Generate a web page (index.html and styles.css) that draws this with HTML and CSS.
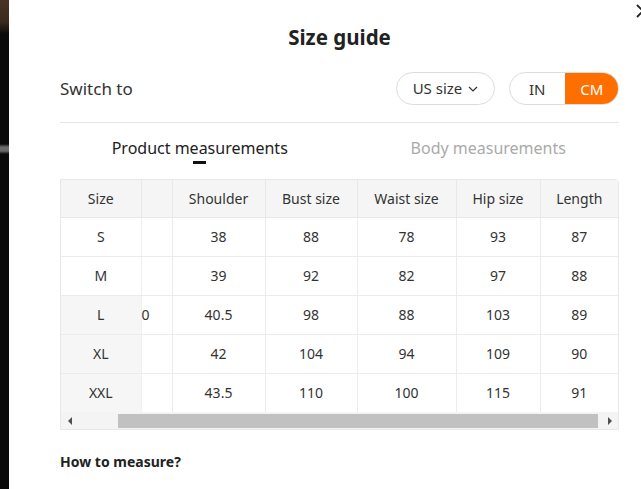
FILE: index.html
```html
<!DOCTYPE html>
<html lang="en">
<head>
<meta charset="utf-8">
<title>Size guide</title>
<link rel="stylesheet" href="styles.css">
</head>
<body>
<div class="page">
  <div class="backdrop"></div>
  <div class="modal">
    <button class="close" aria-label="Close">
      <svg width="16" height="16" viewBox="0 0 16 16"><path d="M2 2 L14 14 M14 2 L2 14" stroke="#222" stroke-width="1.8" fill="none"/></svg>
    </button>
    <h1 class="title">Size guide</h1>
    <div class="switch-row">
      <span class="switch-label">Switch to</span>
      <div class="controls">
        <button class="pill">US size
          <svg class="chev" width="10" height="6" viewBox="0 0 10 6"><path d="M1 1 L5 5 L9 1" stroke="#333" stroke-width="1.2" fill="none"/></svg>
        </button>
        <div class="unit-toggle">
          <span class="unit">IN</span>
          <span class="unit active">CM</span>
        </div>
      </div>
    </div>
    <div class="tabs">
      <div class="tab active">Product measurements<span class="bar"></span></div>
      <div class="tab muted">Body measurements</div>
    </div>
    <div class="table-wrap">
      <table class="sizes">
        <colgroup>
          <col class="c-size"><col class="c-hidden"><col class="c-shoulder"><col class="c-bust"><col class="c-waist"><col class="c-hip"><col class="c-length">
        </colgroup>
        <thead>
          <tr><th>Size</th><th></th><th>Shoulder</th><th>Bust size</th><th>Waist size</th><th>Hip size</th><th>Length</th></tr>
        </thead>
        <tbody>
          <tr><td class="fixed">S</td><td class="cut"></td><td>38</td><td>88</td><td>78</td><td>93</td><td>87</td></tr>
          <tr><td class="fixed">M</td><td class="cut"></td><td>39</td><td>92</td><td>82</td><td>97</td><td>88</td></tr>
          <tr><td class="fixed shade">L</td><td class="cut"><span class="tail">0</span></td><td>40.5</td><td>98</td><td>88</td><td>103</td><td>89</td></tr>
          <tr><td class="fixed shade">XL</td><td class="cut"></td><td>42</td><td>104</td><td>94</td><td>109</td><td>90</td></tr>
          <tr><td class="fixed shade">XXL</td><td class="cut"></td><td>43.5</td><td>110</td><td>100</td><td>115</td><td>91</td></tr>
        </tbody>
      </table>
      <div class="scrollbar">
        <span class="arrow left"></span>
        <div class="track"><div class="thumb"></div></div>
        <span class="arrow right"></span>
      </div>
    </div>
    <h3 class="how">How to measure?</h3>
  </div>
</div>
</body>
</html>
```

FILE: styles.css
```css
* { box-sizing: border-box; }
html, body { margin: 0; padding: 0; }
body {
  width: 641px;
  height: 489px;
  overflow: hidden;
  background: #0b0b0b;
  font-family: "Noto Sans", "Open Sans", Arial, sans-serif;
  color: #333;
}
.page {
  display: flex;
  width: 641px;
  height: 489px;
  overflow: hidden;
}
.backdrop {
  flex: 0 0 9px;
  height: 489px;
  background: linear-gradient(180deg, #4a3424 0, #3a2a1e 22px, #0a0a0a 34px, #0a0a0a 144px, #6a6a6a 147px, #6a6a6a 151px, #0a0a0a 154px, #0a0a0a 100%);
}
.modal {
  position: relative;
  flex: 0 0 661px;
  background: #fff;
  padding: 23px 51px 0;
  display: flex;
  flex-direction: column;
}
.close {
  position: absolute;
  top: 3px;
  left: 626px;
  width: 16px;
  height: 16px;
  padding: 0;
  border: 0;
  background: none;
}
.close svg { display: block; }
.title {
  margin: 0;
  text-align: center;
  font-size: 20.5px;
  line-height: 28px;
  font-weight: 700;
  color: #222;
}
.switch-row {
  margin-top: 21px;
  display: flex;
  align-items: center;
  justify-content: space-between;
  padding-bottom: 17px;
  border-bottom: 1px solid #e6e6e6;
}
.switch-label {
  font-size: 17px;
  color: #333;
}
.controls {
  display: flex;
  gap: 14px;
}
.pill {
  width: 99px;
  height: 33px;
  border: 1px solid #dcdcdc;
  border-radius: 17px;
  background: #fff;
  font-family: inherit;
  font-size: 15px;
  color: #333;
  display: flex;
  align-items: center;
  justify-content: center;
  gap: 6px;
  padding: 0 0 1px;
}
.chev { margin-top: 2px; }
.unit-toggle {
  display: flex;
  width: 110px;
  height: 33px;
  border: 1px solid #dcdcdc;
  border-radius: 17px;
  overflow: hidden;
}
.unit {
  flex: 1;
  display: flex;
  align-items: center;
  justify-content: center;
  font-size: 15px;
  color: #333;
}
.unit.active {
  background: #ff6f00;
  color: #fff;
  margin: -1px -1px -1px 0;
}
.tabs {
  display: grid;
  grid-template-columns: 1fr 1fr;
  padding-top: 14px;
}
.tab {
  display: flex;
  flex-direction: column;
  align-items: center;
  font-size: 16px;
  line-height: 22px;
  color: #222;
}
.tab.muted {
  color: #aaa;
  padding-left: 18px;
}
.bar {
  width: 13px;
  height: 3px;
  background: #111;
  margin-top: 2px;
}
.table-wrap {
  margin-top: 15px;
  border: 1px solid #e8e8e8;
  border-radius: 0 4px 0 0;
  width: 559px;
}
.sizes {
  width: 557px;
  border-collapse: collapse;
  table-layout: fixed;
  font-size: 14px;
}
.c-size { width: 80px; }
.c-hidden { width: 31px; }
.c-shoulder { width: 93px; }
.c-bust { width: 92px; }
.c-waist { width: 99px; }
.c-hip { width: 84px; }
.c-length { width: 78px; }
.sizes th {
  height: 37px;
  background: #f5f5f5;
  font-weight: 400;
  color: #333;
  border-left: 1px solid #e8e8e8;
  border-bottom: 1px solid #e8e8e8;
  padding: 0;
  text-align: center;
}
.sizes th:first-child { border-left: 0; }
.sizes td {
  height: 39px;
  text-align: center;
  color: #333;
  border-left: 1px solid #ececec;
  border-bottom: 1px solid #ececec;
  padding: 0;
}
.sizes td:first-child { border-left: 0; }
.sizes tbody tr:last-child td { border-bottom: 0; }
.sizes td.shade { background: #f6f6f6; }
.sizes td.fixed { border-right: 1px solid #f0f0f0; }
.sizes td.cut {
  border-left: 0;
  text-align: left;
  white-space: nowrap;
}
.tail {
  display: inline-block;
  margin-left: 0;
}
.scrollbar {
  display: flex;
  align-items: center;
  height: 17px;
  background: #f4f4f4;
}
.arrow {
  flex: 0 0 17px;
  height: 17px;
  display: flex;
  align-items: center;
  justify-content: center;
}
.arrow.left::before {
  content: "";
  border-top: 4px solid transparent;
  border-bottom: 4px solid transparent;
  border-right: 4px solid #505050;
}
.arrow.right::before {
  content: "";
  border-top: 4px solid transparent;
  border-bottom: 4px solid transparent;
  border-left: 4px solid #505050;
}
.track {
  flex: 1;
  height: 17px;
  display: flex;
  align-items: center;
  padding-left: 40px;
  padding-right: 3px;
}
.thumb {
  flex: 1;
  height: 14px;
  background: #c1c1c1;
}
.how {
  margin: 22px 0 0;
  font-size: 14px;
  font-weight: 700;
  color: #222;
}
```
